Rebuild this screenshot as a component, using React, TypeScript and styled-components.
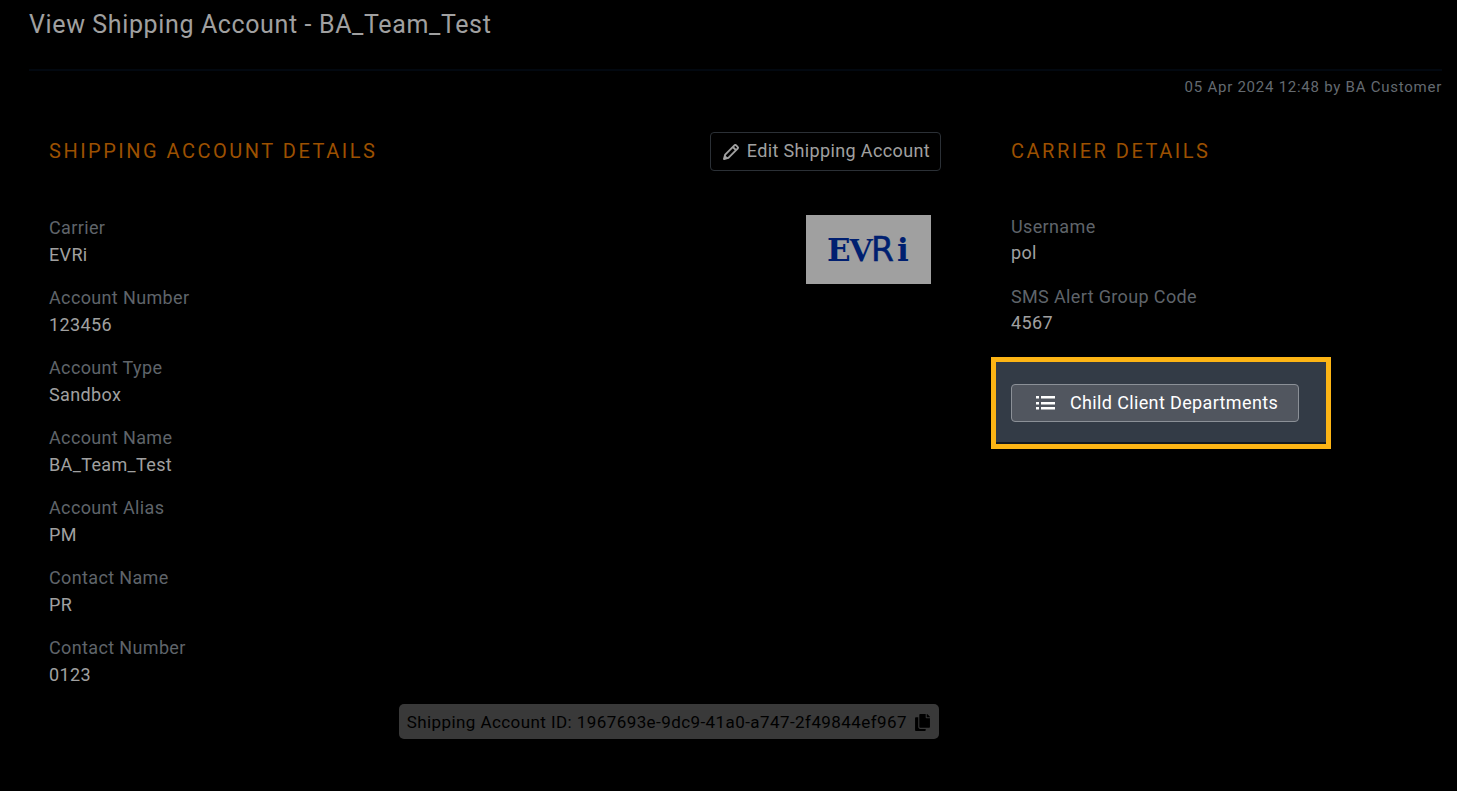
import React from "react";
import styled, { createGlobalStyle } from "styled-components";
import { FaCopy } from "react-icons/fa";

const GlobalStyle = createGlobalStyle`
  * { box-sizing: border-box; }
  body {
    margin: 0;
    background: #000;
    color: #a0a0a0;
    font: 400 18px/27px Roboto, "Liberation Sans", sans-serif;
    letter-spacing: 0.02em;
  }
`;

const Page = styled.main`
  min-height: 100vh;
  padding: 0 15px 0 29px;
`;

const Header = styled.header`
  height: 71px;
  padding-top: 7px;
  border-bottom: 2px solid #020810;
`;

const Title = styled.h1`
  margin: 0;
  font-size: 25px;
  line-height: 36px;
  font-weight: 400;
  letter-spacing: 0.025em;
`;

const Audit = styled.p`
  margin: 0;
  padding-top: 1px;
  font-size: 15px;
  line-height: 30px;
  letter-spacing: 0.05em;
  text-align: right;
  color: #646a70;
`;

const Row = styled.div`
  display: flex;
  margin: 0 -15px;
`;

const Column = styled.section<{ $share: number }>`
  width: calc(100% * ${(p) => p.$share} / 3);
  padding: 30px 35px 0;
`;

const SectionHead = styled.div`
  display: flex;
  align-items: center;
  justify-content: space-between;
  height: 39px;
`;

const SectionTitle = styled.h2`
  margin: 0;
  font-size: 20px;
  line-height: 27px;
  font-weight: 400;
  letter-spacing: 0.125em;
  text-transform: uppercase;
  color: #9c5000;
`;

const Button = styled.button<{ $bright?: boolean }>`
  display: inline-flex;
  align-items: center;
  gap: ${(p) => (p.$bright ? 15 : 8)}px;
  height: ${(p) => (p.$bright ? 38 : 39)}px;
  padding: 0 ${(p) => (p.$bright ? "20px 2px 24px" : "10px 2px 12px")};
  border: 1px solid ${(p) => (p.$bright ? "#8b9097" : "#2b3036")};
  border-radius: 4px;
  background: ${(p) => (p.$bright ? "#51565f" : "transparent")};
  color: ${(p) => (p.$bright ? "#fff" : "#a0a0a0")};
  font: inherit;
  letter-spacing: inherit;
  white-space: nowrap;
  cursor: pointer;

  svg {
    margin-top: 2px;
  }
`;

const Details = styled.div`
  display: flex;
  justify-content: space-between;
  align-items: flex-start;
  padding: 43px 10px 0 0;
`;

const Fields = styled.dl<{ $line: number }>`
  display: grid;
  gap: ${(p) => 70 - 2 * p.$line}px;
  margin: 0;
  line-height: ${(p) => p.$line}px;
`;

const Label = styled.dt`
  color: #5f646a;
`;

const Value = styled.dd`
  margin: 0;
`;

const Logo = styled.svg`
  display: block;
  width: 125px;
  height: 69px;
  margin-top: 1px;
  background: #a0a0a0;
  fill: #001f70;
  letter-spacing: 0;
`;

const IdRow = styled.div`
  display: flex;
  justify-content: flex-end;
  padding: 16px 2px 0 0;
`;

const IdBadge = styled.button`
  display: inline-flex;
  align-items: center;
  gap: 7px;
  height: 35px;
  padding: 1px 8px 0;
  border: 0;
  border-radius: 5px;
  background: #393939;
  color: #000;
  font: 400 17px/27px Roboto, "Liberation Sans", sans-serif;
  letter-spacing: 0.025em;
  cursor: pointer;
`;

const Highlight = styled.div`
  width: 340px;
  max-width: 100%;
  margin: 21px 0 0 -20px;
  padding: 22px 15px;
  border: 5px solid #fdb515;
  background: #333b46;
  box-shadow: inset 0 -2px #15191e;
`;

const accountFields = [
  ["Carrier", "EVRi"],
  ["Account Number", "123456"],
  ["Account Type", "Sandbox"],
  ["Account Name", "BA_Team_Test"],
  ["Account Alias", "PM"],
  ["Contact Name", "PR"],
  ["Contact Number", "0123"],
];

const carrierFields = [
  ["Username", "pol"],
  ["SMS Alert Group Code", "4567"],
];

function FieldList({ items, line }: { items: string[][]; line: number }) {
  return (
    <Fields $line={line}>
      {items.map(([label, value]) => (
        <div key={label}>
          <Label>{label}</Label>
          <Value>{value}</Value>
        </div>
      ))}
    </Fields>
  );
}

function PencilIcon() {
  return (
    <svg width="16" height="16" viewBox="0 0 16 16" fill="none" stroke="currentColor" strokeWidth="1.9" strokeLinejoin="round" aria-hidden="true">
      <path d="M1 15l1.2-4.4L11.4 1.4a1.3 1.3 0 0 1 1.8 0l1.4 1.4a1.3 1.3 0 0 1 0 1.8L5.4 13.8zM9.8 3l3.2 3.2" />
      <path d="M1 15l1-3.4 2.4 2.4z" fill="currentColor" strokeWidth="1" />
    </svg>
  );
}

function ListIcon() {
  return (
    <svg width="19" height="14" viewBox="0 0 19 14" fill="currentColor" aria-hidden="true">
      {[0, 6, 11].map((y) => (
        <React.Fragment key={y}>
          <rect x="0" y={y} width="3" height="2.5" />
          <rect x="5" y={y} width="14" height="2.5" />
        </React.Fragment>
      ))}
    </svg>
  );
}

function CarrierLogo() {
  return (
    <Logo viewBox="0 0 125 69" role="img" aria-label="EVRi">
      <g fontFamily="DejaVu Serif, serif" fontWeight="700" fontSize="31">
        <text x="21" y="46">E</text>
        <text x="91" y="46">i</text>
      </g>
      <text x="43" y="46" fontFamily="Liberation Serif, serif" fontWeight="700" fontSize="34">V</text>
      <text x="65" y="46" fontFamily="DejaVu Sans, sans-serif" fontSize="33" stroke="#001f70" strokeWidth="0.5">R</text>
    </Logo>
  );
}

export default function App() {
  return (
    <>
      <GlobalStyle />
      <Page>
        <Header>
          <Title>View Shipping Account - BA_Team_Test</Title>
        </Header>
        <Audit>05 Apr 2024 12:48 by BA Customer</Audit>
        <Row>
          <Column $share={2}>
            <SectionHead>
              <SectionTitle>Shipping Account Details</SectionTitle>
              <Button type="button">
                <PencilIcon />
                Edit Shipping Account
              </Button>
            </SectionHead>
            <Details>
              <FieldList items={accountFields} line={27} />
              <CarrierLogo />
            </Details>
            <IdRow>
              <IdBadge type="button">
                Shipping Account ID: 1967693e-9dc9-41a0-a747-2f49844ef967
                <FaCopy size={17} />
              </IdBadge>
            </IdRow>
          </Column>
          <Column $share={1}>
            <SectionHead>
              <SectionTitle>Carrier Details</SectionTitle>
            </SectionHead>
            <Details>
              <FieldList items={carrierFields} line={26} />
            </Details>
            <Highlight>
              <Button type="button" $bright>
                <ListIcon />
                Child Client Departments
              </Button>
            </Highlight>
          </Column>
        </Row>
      </Page>
    </>
  );
}
